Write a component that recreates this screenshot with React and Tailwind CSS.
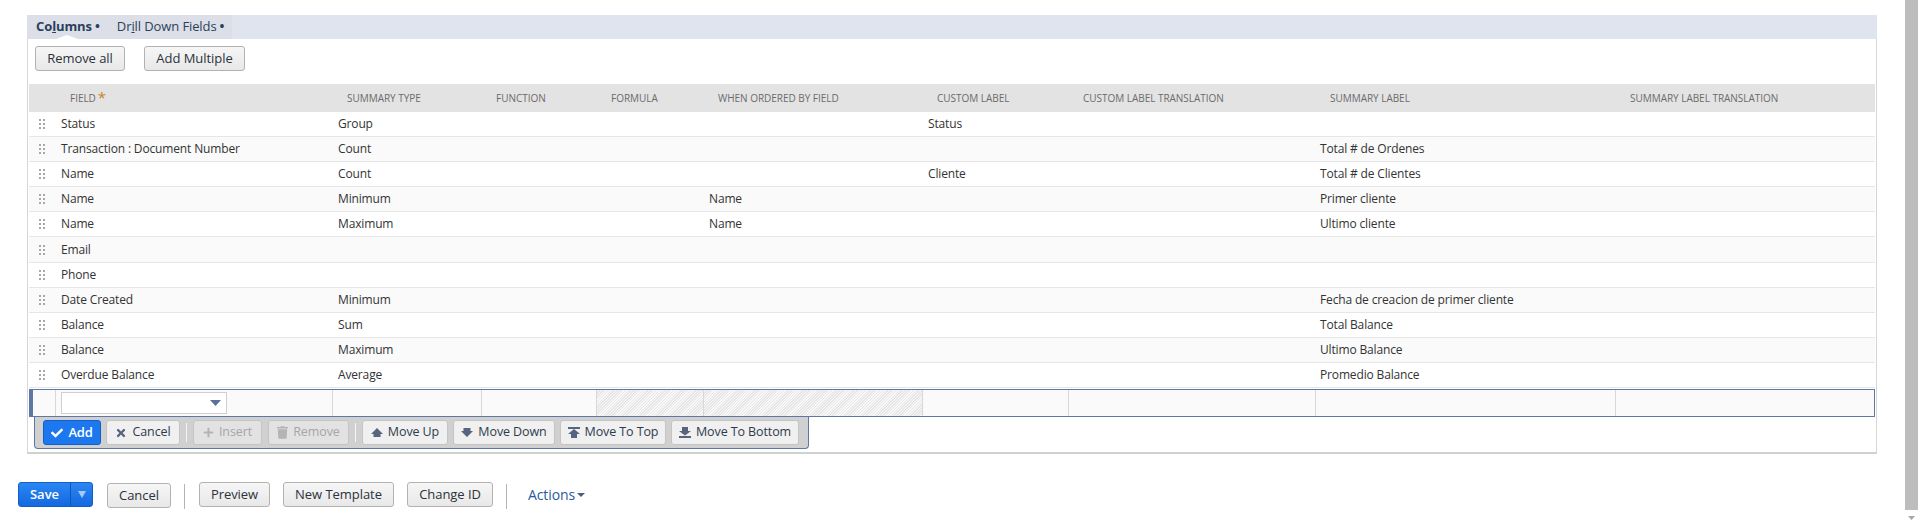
import React from 'react';
import { FaCheck, FaTimes, FaPlus, FaTrash } from 'react-icons/fa';

const COLS = 'grid grid-cols-[27px_277px_149px_115px_107px_219px_146px_247px_300px_258px]';
const HATCH = 'bg-[repeating-linear-gradient(135deg,#e6e6e6_0,#e6e6e6_1px,#f8f8f8_1px,#f8f8f8_2px)]';

const rows = [
  { field: 'Status', type: 'Group', custom: 'Status' },
  { field: 'Transaction : Document Number', type: 'Count', summary: 'Total # de Ordenes' },
  { field: 'Name', type: 'Count', custom: 'Cliente', summary: 'Total # de Clientes' },
  { field: 'Name', type: 'Minimum', ordered: 'Name', summary: 'Primer cliente' },
  { field: 'Name', type: 'Maximum', ordered: 'Name', summary: 'Ultimo cliente' },
  { field: 'Email' },
  { field: 'Phone' },
  { field: 'Date Created', type: 'Minimum', summary: 'Fecha de creacion de primer cliente' },
  { field: 'Balance', type: 'Sum', summary: 'Total Balance' },
  { field: 'Balance', type: 'Maximum', summary: 'Ultimo Balance' },
  { field: 'Overdue Balance', type: 'Average', summary: 'Promedio Balance' },
];

const headers = ['Summary Type', 'Function', 'Formula', 'When Ordered By Field', 'Custom Label', 'Custom Label Translation', 'Summary Label', 'Summary Label Translation'];

function DragHandle() {
  return (
    <svg width="7" height="10" viewBox="0 0 7 10" className="fill-[#a8a8a8]">
      {[0, 4, 8].map((y) => (
        <g key={y}>
          <rect x="0" y={y} width="2" height="2" />
          <rect x="4" y={y} width="2" height="2" />
        </g>
      ))}
    </svg>
  );
}

function MoveIcon({ kind }) {
  const paths = {
    up: 'M6 1 L12 7 L9.5 7 L9.5 10 L2.5 10 L2.5 7 L0 7 Z',
    down: 'M2.5 1 L9.5 1 L9.5 4 L12 4 L6 10 L0 4 L2.5 4 Z',
    top: 'M0 0 H12 V2 H0 Z M6 2 L12 7 L9 7 L9 11 L3 11 L3 7 L0 7 Z',
    bottom: 'M3 0 H9 V4 L12 4 L6 8.5 L0 4 L3 4 Z M0 9 H12 V11 H0 Z',
  };
  return (
    <svg width="12" height="11" viewBox="0 0 12 11" className="fill-[#56657d]">
      <path d={paths[kind]} />
    </svg>
  );
}

function BarButton({ icon, label, width, disabled }) {
  return (
    <button className={`${width} h-[25px] flex items-center justify-center gap-[5px] rounded-[3px] border border-[#c4c4c4] text-[12.5px] tracking-[-0.1px] ${disabled ? 'bg-[#e2e2e2] text-[#a6a6a6]' : 'bg-[#f0f0f0] text-[#2f3b4c]'}`}>
      {icon}
      {label}
    </button>
  );
}

function GreyButton({ label, width }) {
  return (
    <button className={`${width} h-[25px] rounded-[3px] border border-[#b2b2b2] bg-gradient-to-b from-[#f6f6f6] to-[#e8e8e8] text-[13px] tracking-[-0.05px] text-[#2b323c]`}>
      {label}
    </button>
  );
}

export default function App() {
  return (
    <div className="w-[1920px] h-[525px] flex overflow-hidden bg-white font-['Open_Sans',sans-serif] text-[#333]">
      <div className="flex-1 pt-[15px] pl-[27px] pr-[28px]">
        <div className="h-[24px] bg-[#dfe4ee] flex">
          <div className="relative w-[205px] h-full bg-[#dcdfe7] flex items-center pl-[9px] text-[13px] text-[#2b3f5c]">
            <span className="font-bold tracking-[-0.1px]">Co<span className="underline">l</span>umns</span>
            <span className="ml-[3px] font-bold">•</span>
            <span className="ml-[17px] tracking-[-0.1px]">Dr<span className="underline">i</span>ll Down Fields</span>
            <span className="ml-[3px] font-bold">•</span>
            <span className="absolute left-[29px] bottom-0 w-0 h-0 border-x-[11px] border-x-transparent border-b-[4px] border-b-white" />
          </div>
        </div>

        <div className="h-[415px] border-x border-[#d6d6d6] border-b-2 border-b-[#d0d0d0] pl-[1px] pr-[1px]">
          <div className="h-[45px] pt-[7px] pl-[6px] flex gap-[19px]">
            <GreyButton label="Remove all" width="w-[90px]" />
            <GreyButton label="Add Multiple" width="w-[101px]" />
          </div>

          <div className={`${COLS} h-[28px] bg-[#e3e3e3] items-center text-[10px] tracking-[-0.03px] uppercase text-[#6b6b6b]`}>
            <div />
            <div className="pl-[14px] flex items-start">
              Field<span className="ml-[2px] text-[15px] leading-[13px] text-[#c8862c]">*</span>
            </div>
            {headers.map((h) => (
              <div key={h} className="pl-[14px] whitespace-nowrap">{h}</div>
            ))}
          </div>

          {rows.map((r, i) => (
            <div key={i} className={`${COLS} h-[25.1px] items-center border-b border-[#e6e6e6] text-[12px] tracking-[-0.15px] ${i % 2 ? 'bg-[#fafafa]' : 'bg-white'}`}>
              <div className="pl-[10px] flex items-center"><DragHandle /></div>
              <div className="pl-[5px]">{r.field}</div>
              <div className="pl-[5px]">{r.type}</div>
              <div />
              <div />
              <div className="pl-[5px]">{r.ordered}</div>
              <div className="pl-[5px]">{r.custom}</div>
              <div />
              <div className="pl-[4px] whitespace-nowrap">{r.summary}</div>
              <div />
            </div>
          ))}

          <div className={`${COLS} mt-[1px] h-[28px] bg-[#fafafa] border-y border-[#5f77a3] border-r border-r-[#5f77a3]`}>
            <div className="border-l-[4px] border-l-[#5f77a3] border-r border-r-[#d8d8d8]" />
            <div className="border-r border-[#d8d8d8] pl-[5px] pt-[2px]">
              <div className="w-[166px] h-[22px] bg-white border border-[#cfcfcf] flex items-center justify-end pr-[5px]">
                <svg width="11" height="6" viewBox="0 0 11 6" className="fill-[#5a7299]"><path d="M0 0 H11 L5.5 6 Z" /></svg>
              </div>
            </div>
            <div className="border-r border-[#d8d8d8]" />
            <div className="border-r border-[#d8d8d8]" />
            <div className={`border-r border-[#d8d8d8] ${HATCH}`} />
            <div className={`border-r border-[#d8d8d8] ${HATCH}`} />
            <div className="border-r border-[#d8d8d8]" />
            <div className="border-r border-[#d8d8d8]" />
            <div className="border-r border-[#d8d8d8]" />
            <div />
          </div>

          <div className="ml-[5px] w-[775px] h-[32px] bg-[#d0d0d0] border-x border-b border-[#5f77a3] rounded-b-[4px] flex items-start pt-[3px] pl-[8px]">
            <button className="w-[58px] h-[25px] mr-[5px] flex items-center justify-center gap-[5px] rounded-[3px] border border-[#1160c8] bg-[#1d78ef] text-[13px] font-semibold tracking-[-0.2px] text-white">
              <FaCheck className="w-[12px] h-[12px]" />Add
            </button>
            <BarButton icon={<FaTimes className="w-[12px] h-[12px] text-[#56657d]" />} label="Cancel" width="w-[74px]" />
            <span className="w-[1px] h-[19px] mt-[3px] mx-[6px] bg-[#f4f4f4]" />
            <div className="flex gap-[6px]">
              <BarButton icon={<FaPlus className="w-[11px] h-[11px] text-[#b4b4b4]" />} label="Insert" width="w-[69px]" disabled />
              <BarButton icon={<FaTrash className="w-[11px] h-[13px] text-[#b4b4b4]" />} label="Remove" width="w-[81px]" disabled />
            </div>
            <span className="w-[1px] h-[19px] mt-[3px] mx-[6px] bg-[#f4f4f4]" />
            <div className="flex gap-[5px]">
              <BarButton icon={<MoveIcon kind="up" />} label="Move Up" width="w-[86px]" />
              <BarButton icon={<MoveIcon kind="down" />} label="Move Down" width="w-[102px]" />
              <BarButton icon={<MoveIcon kind="top" />} label="Move To Top" width="w-[106px]" />
              <BarButton icon={<MoveIcon kind="bottom" />} label="Move To Bottom" width="w-[128px]" />
            </div>
          </div>
        </div>

        <div className="mt-[28px] -ml-[9px] flex items-start h-[27px]">
          <div className="w-[75px] h-[25px] flex rounded-[3px] border border-[#1160c8] bg-gradient-to-b from-[#2a86f3] to-[#1468e0] text-white text-[13px] font-semibold">
            <span className="w-[51px] text-center leading-[22px]">Save</span>
            <span className="flex-1 border-l border-[#0f56b8] flex items-center justify-center">
              <svg width="8" height="7" viewBox="0 0 8 7" className="fill-[#a9c8f2]"><path d="M0 0 H8 L4 7 Z" /></svg>
            </span>
          </div>
          <div className="ml-[14px]"><GreyButton label="Cancel" width="w-[64px]" /></div>
          <span className="w-[1px] h-[25px] mt-[2px] ml-[13px] mr-[14px] bg-[#b4b4b4]" />
          <div className="flex gap-[13px]">
            <GreyButton label="Preview" width="w-[71px]" />
            <GreyButton label="New Template" width="w-[111px]" />
            <GreyButton label="Change ID" width="w-[86px]" />
          </div>
          <span className="w-[1px] h-[25px] mt-[2px] ml-[13px] mr-[21px] bg-[#b4b4b4]" />
          <span className="flex items-center h-[25px] text-[14px] tracking-[-0.1px] text-[#2a5a9e]">
            Actions
            <svg width="8" height="4" viewBox="0 0 8 4" className="ml-[2px] fill-[#4a5f80]"><path d="M0 0 H8 L4 4 Z" /></svg>
          </span>
        </div>
      </div>

      <div className="w-[16px] h-full pr-[2px] flex flex-col">
        <div className="h-[510px] bg-[#bdbdbd]" />
        <div className="flex-1 flex items-center justify-center">
          <svg width="7" height="4" viewBox="0 0 7 4" className="fill-[#a8a8a8]"><path d="M0 0 H7 L3.5 4 Z" /></svg>
        </div>
      </div>
    </div>
  );
}
